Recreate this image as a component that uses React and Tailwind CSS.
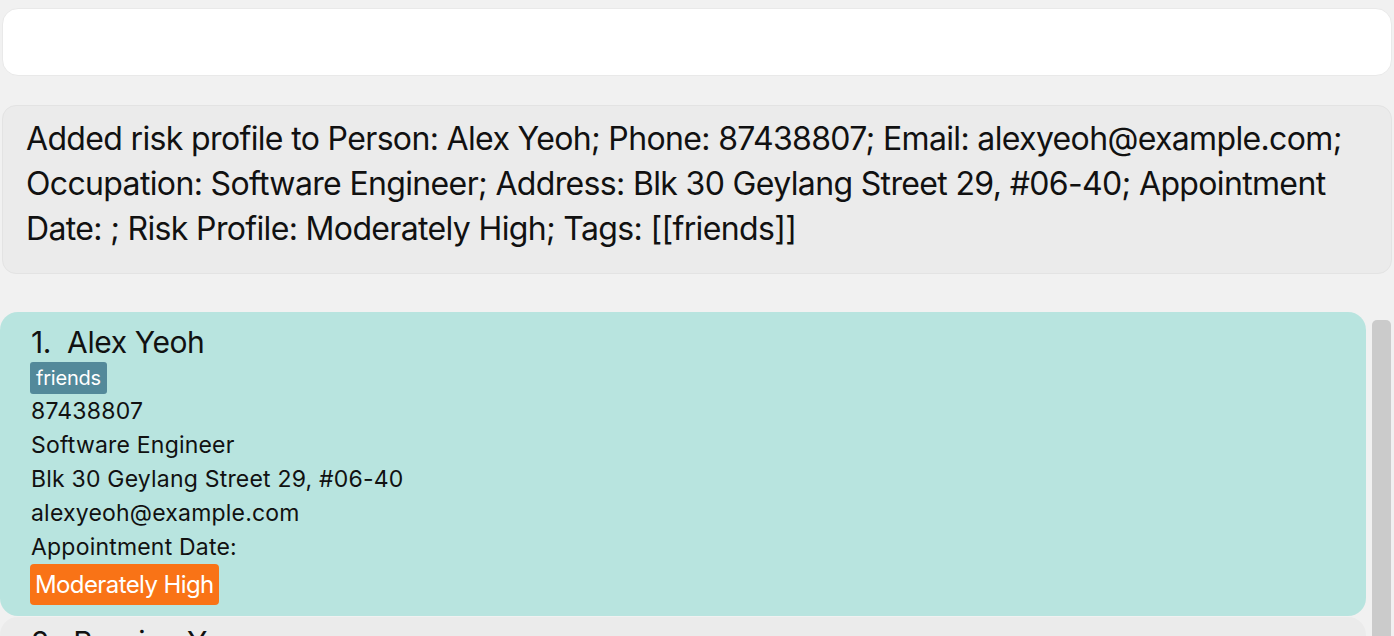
export default function App() {
  const font = { fontFamily: 'Inter, "Noto Sans", sans-serif' };
  return (
    <div className="w-[1394px] h-[636px] overflow-hidden bg-[#f1f1f1] text-[#111111]" style={font}>
      <div className="pt-2 px-[2px]">
        <div className="h-[68px] bg-white rounded-[16px] border border-[#e9e9e9]"></div>
      </div>
      <div className="pt-[29px] px-[2px]">
        <div className="h-[169px] bg-[#ebebeb] rounded-[14px] border border-[#e3e3e3] pl-[23px] pr-[30px] pt-[10px] text-[32px] leading-[45px] tracking-[-0.65px]">
          Added risk profile to Person: Alex Yeoh; Phone: 87438807; Email: alexyeoh@example.com; Occupation: Software Engineer; Address: Blk 30 Geylang Street 29, #06-40; Appointment Date: ; Risk Profile: Moderately High; Tags: [[friends]]
        </div>
      </div>
      <div className="flex pt-[38px]">
        <div className="w-[1366px] flex flex-col gap-[1px]">
          <div className="bg-[#b8e4df] rounded-[18px] pl-[30px] pt-[11px] pb-[11px] flex flex-col items-start">
            <div className="text-[30px] leading-[39px] pl-[1px] tracking-[-0.4px]">1.&nbsp;&nbsp;Alex Yeoh</div>
            <div className="bg-[#53899a] text-white text-[20px] leading-[32px] px-[6px] rounded-[3px] tracking-[-0.2px]">friends</div>
            <div className="pl-[1px] text-[23px] leading-[34px] tracking-[0.2px]">
              <div>87438807</div>
              <div>Software Engineer</div>
              <div>Blk 30 Geylang Street 29, #06-40</div>
              <div>alexyeoh@example.com</div>
              <div>Appointment Date:</div>
            </div>
            <div className="bg-[#f97316] text-white text-[24px] leading-[41px] px-[5px] rounded-[4px] tracking-[-0.6px]">Moderately High</div>
          </div>
          <div className="bg-[#ebebeb] rounded-t-[18px] pl-[30px] pt-[6px] h-[120px]">
            <div className="text-[30px] leading-[39px] pl-[1px] tracking-[-0.4px]">2.&nbsp;&nbsp;Bernice Yu</div>
          </div>
        </div>
        <div className="pl-[6px] pt-[8px]">
          <div className="w-[19px] h-[400px] bg-[#cbcbcb] rounded-[5px]"></div>
        </div>
      </div>
    </div>
  );
}
